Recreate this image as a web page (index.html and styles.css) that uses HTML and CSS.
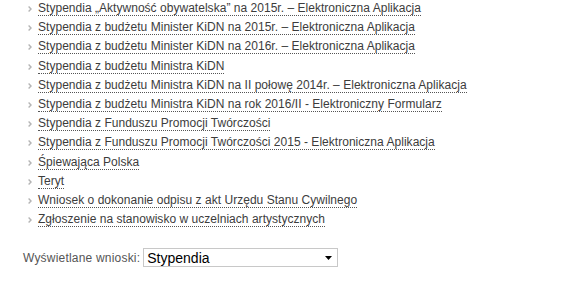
FILE: index.html
```html
<!DOCTYPE html>
<html lang="pl">
<head>
<meta charset="utf-8">
<link rel="stylesheet" href="styles.css">
</head>
<body>
<ul class="links">
  <li><a href="#">Stypendia „Aktywność obywatelska” na 2015r. – Elektroniczna Aplikacja</a></li>
  <li><a href="#">Stypendia z budżetu Minister KiDN na 2015r. – Elektroniczna Aplikacja</a></li>
  <li><a href="#">Stypendia z budżetu Minister KiDN na 2016r. – Elektroniczna Aplikacja</a></li>
  <li><a href="#">Stypendia z budżetu Ministra KiDN</a></li>
  <li><a href="#">Stypendia z budżetu Ministra KiDN na II połowę 2014r. – Elektroniczna Aplikacja</a></li>
  <li><a href="#">Stypendia z budżetu Ministra KiDN na rok 2016/II - Elektroniczny Formularz</a></li>
  <li><a href="#">Stypendia z Funduszu Promocji Twórczości</a></li>
  <li><a href="#">Stypendia z Funduszu Promocji Twórczości 2015 - Elektroniczna Aplikacja</a></li>
  <li><a href="#">Śpiewająca Polska</a></li>
  <li><a href="#">Teryt</a></li>
  <li><a href="#">Wniosek o dokonanie odpisu z akt Urzędu Stanu Cywilnego</a></li>
  <li><a href="#">Zgłoszenie na stanowisko w uczelniach artystycznych</a></li>
</ul>
<div class="filter">
  <label class="filter-label">Wyświetlane wnioski:</label>
  <div class="select">
    <span class="select-value">Stypendia</span>
    <svg class="select-arrow" width="7" height="4" viewBox="0 0 7 4"><path d="M0 0H7L3.5 4Z" fill="#000"/></svg>
  </div>
</div>
</body>
</html>
```

FILE: styles.css
```css
html, body {
  margin: 0;
  padding: 0;
  background: #fff;
}
body {
  font-family: "Liberation Sans", Arial, sans-serif;
  font-size: 12px;
  color: #3c3c3c;
  width: 562px;
  height: 281px;
  overflow: hidden;
}
.links {
  list-style: none;
  margin: -1px 0 0 0;
  padding: 0 0 0 28px;
}
.links li {
  display: flex;
  align-items: center;
  height: 19.2px;
}
.links li::before {
  content: "";
  width: 4px;
  height: 6px;
  margin-right: 6px;
  margin-top: 1px;
  flex: none;
  background: url("data:image/svg+xml,%3Csvg xmlns='http://www.w3.org/2000/svg' width='4' height='6' viewBox='0 0 4 6'%3E%3Cpath d='M0.6 0.6L3 3L0.6 5.4' fill='none' stroke='%23b4b4b4' stroke-width='1.4'/%3E%3C/svg%3E") no-repeat;
}
.links a {
  color: #3c3c3c;
  text-decoration: none;
  border-bottom: 1px dotted #555;
  line-height: 14px;
  letter-spacing: 0.03px;
}
.filter {
  display: flex;
  align-items: center;
  margin: 19px 0 0 23px;
}
.filter-label {
  color: #555;
  letter-spacing: 0.2px;
  margin-right: 3px;
}
.select {
  display: flex;
  align-items: center;
  justify-content: space-between;
  box-sizing: border-box;
  width: 195px;
  height: 19px;
  border: 1px solid #c8c8c8;
  padding: 0 5px 0 3px;
  font-size: 14px;
  color: #000;
}
.select-arrow {
  display: block;
  margin-top: 1px;
}
```
